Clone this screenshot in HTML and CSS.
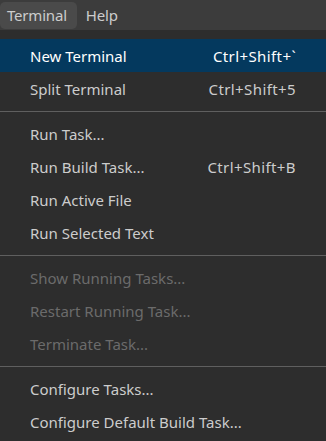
FILE: index.html
```html
<!DOCTYPE html>
<html lang="en">
<head>
    <meta charset="UTF-8">
    <meta name="viewport" content="width=device-width, initial-scale=1.0">
    <title>Terminal Menu</title>
    <link rel="stylesheet" href="styles.css">
</head>
<body>
    <!-- Top menu bar -->
    <div class="menubar">
        <div class="menubar-item open">Terminal</div>
        <div class="menubar-item">Help</div>
    </div>

    <!-- Dropdown for the Terminal menu -->
    <div class="menu">
        <div class="menu-item selected"><span class="label">New Terminal</span><span class="keys">Ctrl+Shift+`</span></div>
        <div class="menu-item"><span class="label">Split Terminal</span><span class="keys">Ctrl+Shift+5</span></div>
        <div class="separator"></div>
        <div class="menu-item"><span class="label">Run Task...</span></div>
        <div class="menu-item"><span class="label">Run Build Task...</span><span class="keys">Ctrl+Shift+B</span></div>
        <div class="menu-item"><span class="label">Run Active File</span></div>
        <div class="menu-item"><span class="label">Run Selected Text</span></div>
        <div class="separator"></div>
        <div class="menu-item disabled"><span class="label">Show Running Tasks...</span></div>
        <div class="menu-item disabled"><span class="label">Restart Running Task...</span></div>
        <div class="menu-item disabled"><span class="label">Terminate Task...</span></div>
        <div class="separator"></div>
        <div class="menu-item"><span class="label">Configure Tasks...</span></div>
        <div class="menu-item"><span class="label">Configure Default Build Task...</span></div>
    </div>
</body>
</html>
```

FILE: styles.css
```css
body {
    margin: 0;
    padding: 0;
    font-family: "Noto Sans", "Open Sans", sans-serif;
    font-size: 15px;
    background: #2d2d2d;
    color: #cccccc;
    overflow: hidden;
}

.menubar {
    display: flex;
    gap: 2px;
    height: 30px;
    background: #3c3c3c;
    align-items: center;
}

.menubar-item {
    height: 27px;
    line-height: 27px;
    padding: 0 8px 0 7px;
    border-radius: 5px;
    margin-top: 1px;
    letter-spacing: -0.2px;
}

.menubar-item.open {
    background: #4a4a4a;
    padding-right: 10px;
}

.menu {
    padding-top: 9px;
    background: #2d2d2d;
}

.menu-item {
    display: flex;
    justify-content: space-between;
    align-items: center;
    height: 33px;
    padding: 0 30px;
}

.menu-item .keys {
    letter-spacing: 0.4px;
}

.menu-item.selected {
    background: #04395e;
    color: #ffffff;
}

.menu-item.disabled {
    color: #6b6b6b;
}

.separator {
    height: 1px;
    margin: 6px 0 5px 0;
    background: #5f5f5f;
}
```
